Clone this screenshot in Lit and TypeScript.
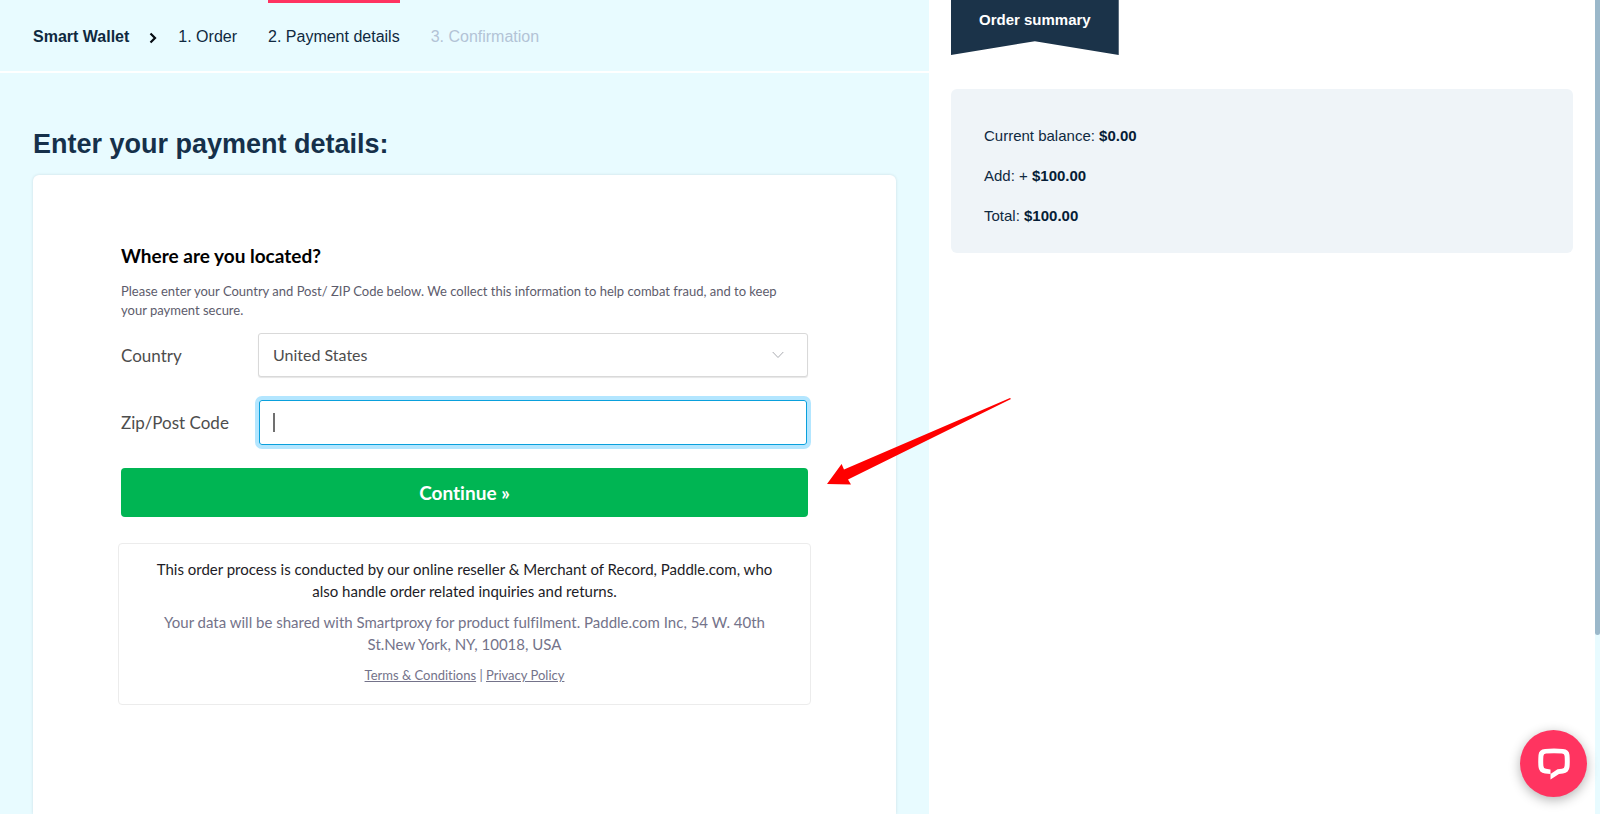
import { LitElement, html, css } from "lit";
import { customElement, property } from "lit/decorators.js";

@customElement("checkout-steps")
class CheckoutSteps extends LitElement {
  static styles = css`
    :host { display: block; border-bottom: 2px solid #fff; }
    .bar { display: flex; align-items: stretch; height: 71px; padding: 0 33px; font-size: 16px; line-height: 20px; color: #0f2940; }
    .brand { font-weight: 700; display: flex; align-items: center; padding-top: 2px; }
    .chevron { align-self: center; width: 8px; height: 12px; margin: 4px 21px 0 20px; }
    .steps { display: flex; gap: 31px; margin: 0; padding: 0; list-style: none; }
    .step { display: flex; align-items: center; border-top: 3px solid transparent; box-sizing: border-box; }
    .current { border-top-color: #ff3361; }
    .pending { color: #b3c3d6; }
  `;
  render() {
    return html`
      <nav class="bar" aria-label="Checkout steps">
        <span class="brand">Smart Wallet</span>
        <svg class="chevron" viewBox="0 0 8 12" aria-hidden="true"><path d="M1.5 1.5 6 6 1.5 10.5" fill="none" stroke="#050b12" stroke-width="2.2" /></svg>
        <ol class="steps">
          <li class="step">1. Order</li>
          <li class="step current" aria-current="step">2. Payment details</li>
          <li class="step pending">3. Confirmation</li>
        </ol>
      </nav>
    `;
  }
}

@customElement("payment-form")
class PaymentForm extends LitElement {
  static styles = css`
    :host { display: block; font-family: Lato, "Liberation Sans", sans-serif; font-variant-ligatures: none; color: #4d4d4d; }
    .title { margin: 0; font-size: 19px; line-height: 24px; font-weight: 700; color: #000; }
    .hint { margin: 14px 0 13px; padding-right: 16px; font-size: 13px; line-height: 19px; color: #5d5c6c; }
    .row { display: grid; grid-template-columns: 137px 1fr; align-items: center; font-size: 17px; margin-bottom: 23px; }
    .field { position: relative; }
    .control { display: block; box-sizing: border-box; width: 100%; height: 44px; padding: 0 14px; border: 1px solid #d9d9d9; border-radius: 3px; background: #fff; font: 16px/20px Lato, "Liberation Sans", sans-serif; color: #4d4d4d; appearance: none; outline: none; }
    .select { box-shadow: 0 1px 1px rgba(0, 0, 0, 0.1); }
    .arrow { position: absolute; right: 24px; top: 18px; width: 12px; height: 8px; pointer-events: none; }
    .zip { height: 45px; border: 0; box-shadow: inset 0 0 0 1px #0aa0dc, 0 0 0 4px #b3e6ff; caret-color: transparent; background: linear-gradient(#707070, #707070) 14px 13px / 2px 19px no-repeat #fff; }
    .zipfield { padding: 0 1px; }
    .submit { display: block; width: 100%; height: 49px; border: 0; border-radius: 4px; background: #00b553; color: #fff; font: 700 19px/24px Lato, "Liberation Sans", sans-serif; font-variant-ligatures: none; }
    .legal { margin: 26px -3px 0; padding: 14px 24px 18px; border: 1px solid #ececec; border-radius: 4px; text-align: center; font-size: 15px; line-height: 22px; color: #74738a; }
    .para { margin: 0 0 9px; }
    .strong { color: #1d1c26; }
    .links { margin: 0; font-size: 13px; }
    .link { color: inherit; }
  `;
  render() {
    return html`
      <form>
        <h2 class="title">Where are you located?</h2>
        <p class="hint">Please enter your Country and Post/ ZIP Code below. We collect this information to help combat fraud, and to keep your payment secure.</p>
        <div class="row">
          <label for="country">Country</label>
          <div class="field">
            <select class="control select" id="country"><option>United States</option></select>
            <svg class="arrow" viewBox="0 0 12 8" aria-hidden="true"><path d="M.7 1 6 6.5 11.300 1" fill="none" stroke="#a9abb0" /></svg>
          </div>
        </div>
        <div class="row">
          <label for="zip">Zip/Post Code</label>
          <div class="zipfield"><input class="control zip" id="zip" type="text" autocomplete="postal-code" /></div>
        </div>
        <button class="submit" type="button">Continue »</button>
      </form>
      <section class="legal">
        <p class="para strong">This order process is conducted by our online reseller &amp; Merchant of Record, Paddle.com, who also handle order related inquiries and returns.</p>
        <p class="para">Your data will be shared with Smartproxy for product fulfilment. Paddle.com Inc, 54 W. 40th St.New York, NY, 10018, USA</p>
        <p class="links"><a class="link" href="#terms">Terms &amp; Conditions</a> | <a class="link" href="#privacy">Privacy Policy</a></p>
      </section>
    `;
  }
}

@customElement("order-summary")
class OrderSummary extends LitElement {
  @property({ attribute: false }) lines: [string, string][] = [];
  static styles = css`
    :host { display: block; padding: 0 22px; font-size: 15px; line-height: 20px; color: #0f2940; }
    .ribbon { width: fit-content; margin: 0 0 34px; padding: 10px 28px 25px; background: #1b3349; color: #fff; font-size: 15px; line-height: 20px; font-weight: 700; clip-path: polygon(0 0, 100% 0, 100% 100%, 50% 75%, 0 100%); }
    .box { display: grid; gap: 20px; padding: 37px 33px 27px; border-radius: 6px; background: #eff4f8; }
    .line { margin: 0; }
    .amount { color: #061d36; }
  `;
  render() {
    return html`
      <h2 class="ribbon">Order summary</h2>
      <div class="box">
        ${this.lines.map(([label, amount]) => html`<p class="line">${label} <strong class="amount">${amount}</strong></p>`)}
      </div>
    `;
  }
}

@customElement("app-root")
class AppRoot extends LitElement {
  static styles = css`
    :host { display: grid; grid-template-columns: 929fr 666fr 5px; height: 100vh; overflow: hidden; position: relative; background: #fff; font-family: "Liberation Sans", Arial, sans-serif; }
    .main { display: flex; flex-direction: column; background: #e8fbff; min-height: 0; }
    .content { flex: 1; display: flex; flex-direction: column; padding: 54px 33px 0; }
    .heading { margin: 0 0 14px; font-size: 27px; line-height: 34px; font-weight: 700; color: #15304a; }
    .card { flex: 1; padding: 69px 88px 0; border-radius: 6px 6px 0 0; background: #fff; box-shadow: 0 0 3px rgba(27, 51, 73, 0.15); }
    .track { background: #e8fbff; }
    .thumb { height: 78%; border-radius: 0 0 3px 3px; background: #9bb8ca; }
    .pointer { position: absolute; left: 827px; top: 398px; width: 184px; height: 87px; pointer-events: none; }
    .chat { position: absolute; right: 13px; bottom: 17px; width: 67px; height: 67px; padding: 0; border: 0; border-radius: 50%; background: #ff3460; box-shadow: 0 3px 12px rgba(0, 0, 0, 0.3); display: grid; place-items: center; }
    .bubble { width: 32px; height: 32px; }
  `;
  render() {
    return html`
      <main class="main">
        <checkout-steps></checkout-steps>
        <div class="content">
          <h1 class="heading">Enter your payment details:</h1>
          <div class="card"><payment-form></payment-form></div>
        </div>
      </main>
      <order-summary .lines=${[["Current balance:", "$0.00"], ["Add: +", "$100.00"], ["Total:", "$100.00"]]}></order-summary>
      <div class="track"><div class="thumb"></div></div>
      <svg class="pointer" viewBox="0 0 184 87" aria-hidden="true"><path d="M0 86 14.600 66 17 71.500 183 0 184 1 21 81.500 24 86.500Z" fill="#f00" /></svg>
      <button class="chat" type="button" aria-label="Open chat">
        <svg class="bubble" viewBox="0 0 32 32" aria-hidden="true"><path fill="#fff" fill-rule="evenodd" d="M7 1Q16 0 25 1 31 1.500 31.500 7 32 13.500 31.500 19 31 24.500 25 25.500L21 26 12.500 31.500V26L7 25.500Q1 24.500 .5 19 0 13.500 .5 7 1 1.500 7 1ZM8 5.500Q5.500 5.700 5.400 8 5 13.500 5.400 18 5.500 20.500 8 20.800L12.500 21.500V26L19.500 21.300 24 20.800Q26.500 20.500 26.600 18 27 13.500 26.600 8 26.500 5.700 24 5.500 16 4.900 8 5.500Z" /></svg>
      </button>
    `;
  }
}
